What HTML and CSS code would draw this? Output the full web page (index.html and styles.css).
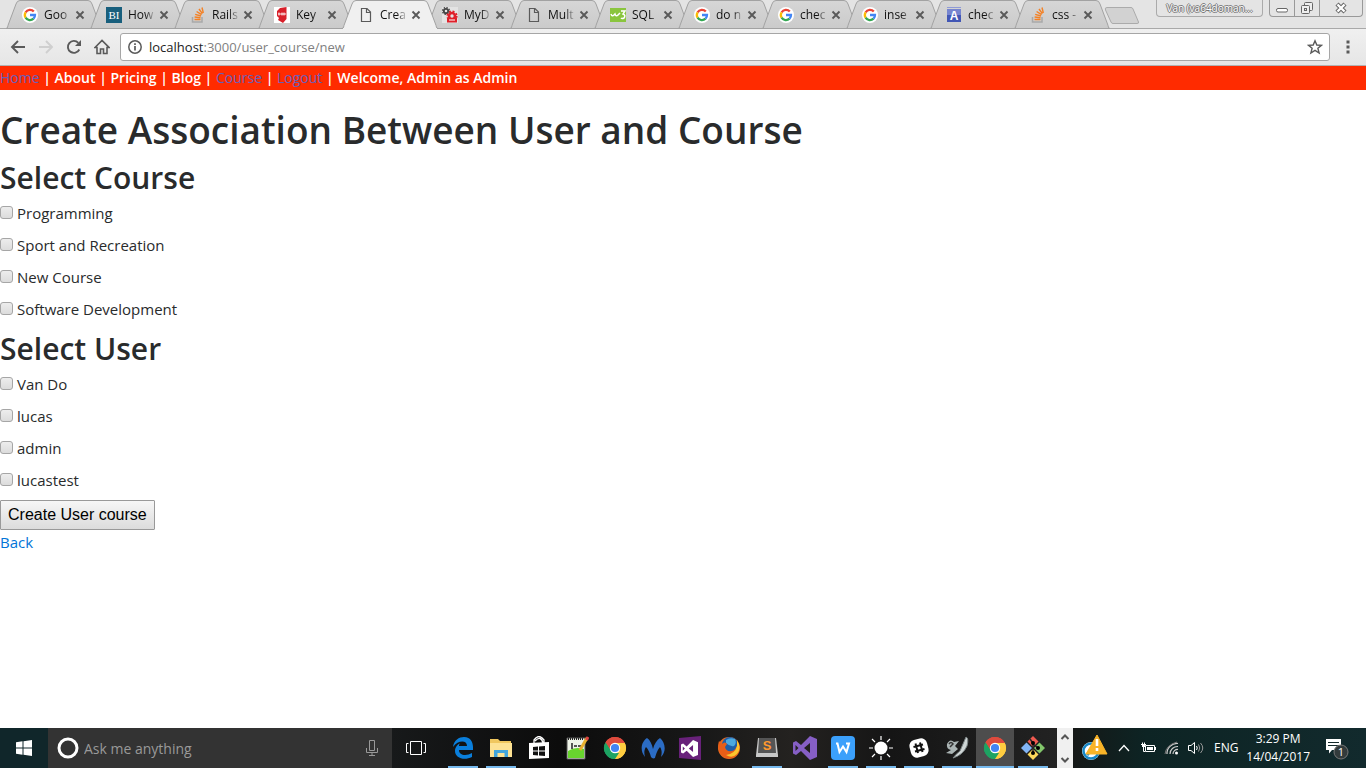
FILE: index.html
```html
<!DOCTYPE html>
<html lang="en">
<head>
<meta charset="utf-8">
<title>Create Association Between User and Course</title>
<link rel="stylesheet" href="styles.css">
</head>
<body>
<svg class="defs" aria-hidden="true">
  <defs>
    <linearGradient id="tabfill" x1="0" y1="0" x2="0" y2="1"><stop offset="0" stop-color="#d6d6d6"/><stop offset="1" stop-color="#cbcbcb"/></linearGradient>
    <symbol id="shape" viewBox="0 0 96 29"><path d="M0 28.5C2 28.5 1.500 26 2.500 24L10 4Q11 .5 14 .5H82Q85 .5 86 4L93.500 24C94.500 26 94 28.500 96 28.500Z"/></symbol>
    <symbol id="google" viewBox="0 0 16 16"><circle cx="8" cy="8" r="8" fill="#fff"/><g fill="none" stroke-width="2.300"><path d="M3.600 5.300A5.100 5.100 0 0 1 11.800 4.600" stroke="#ea4335"/><path d="M3.600 5.300A5.200 5.200 0 0 0 3.600 10.700" stroke="#fbbc05"/><path d="M3.600 10.700A5.100 5.100 0 0 0 11.500 11.700" stroke="#34a853"/><path d="M8 8H13A5 5 0 0 1 11.500 11.700" stroke="#4285f4"/></g></symbol>
    <symbol id="stack" viewBox="0 0 16 16"><path d="M2.500 10V15H12V10" fill="none" stroke="#a9a9a9" stroke-width="1.500"/><path d="M4.500 12.500H10.500M4.600 10L10.500 10.800M5.200 7.300L11 9M6.600 4.500L11.600 7.700M9 2L12.400 6.700M12 .5L13.300 6" stroke="#f48024" stroke-width="1.400"/></symbol>
    <symbol id="page" viewBox="0 0 16 16"><path d="M3.500 1.500H9L12.500 5V14.500H3.500ZM8.500 1.500V5.500H12.500" fill="none" stroke="#5a5a5a" stroke-width="1.200"/></symbol>
    <symbol id="x" viewBox="0 0 10 10"><path d="M1.500 1.500L8.500 8.500M8.500 1.500L1.500 8.500" stroke="#5a5a5a" stroke-width="1.900"/></symbol>
    <symbol id="chrome" viewBox="0 0 24 24"><path d="M12 12L2.470 6.500A11 11 0 0 1 21.530 6.500Z" fill="#ea4335"/><path d="M12 12L21.530 6.500A11 11 0 0 1 12 23Z" fill="#ffcd40"/><path d="M12 12V23A11 11 0 0 1 2.470 6.500Z" fill="#1da362"/><path d="M12 7H21.800A11 11 0 0 1 12 23L16.300 14.500Z" fill="#ffcd40"/><path d="M12 7H21.800A11 11 0 0 0 2.470 6.500L7.700 14.500Z" fill="#dd4b3e"/><path d="M2.470 6.500L7.700 14.500L12 17H16L12 23A11 11 0 0 1 2.470 6.500Z" fill="#1da362"/><circle cx="12" cy="12" r="5.200" fill="#fff"/><circle cx="12" cy="12" r="4.100" fill="#4285f4"/></symbol>
    <symbol id="vs" viewBox="0 0 24 24"><path fill-rule="evenodd" d="M17 0L24 3V21L17 24L8 15L3 19L0 17.500V6.500L3 5L8 9ZM17 7L11 12L17 17ZM2.500 9V15L5.500 12Z"/></symbol>
  </defs>
</svg>

<header class="browser">
  <div class="strip">
    <nav class="tabs" aria-label="Tabs">
      <div class="tab"><svg class="shape"><use href="#shape"/></svg><svg class="fav"><use href="#google"/></svg><span class="name">Goo</span><button class="close" aria-label="Close tab"><svg><use href="#x"/></svg></button></div>
      <div class="tab"><svg class="shape"><use href="#shape"/></svg><svg class="fav" viewBox="0 0 16 16"><path d="M0 0H16V16H0Z" fill="#185f7d"/><text x="8" y="12" class="bi" text-anchor="middle">BI</text></svg><span class="name">How</span><button class="close" aria-label="Close tab"><svg><use href="#x"/></svg></button></div>
      <div class="tab"><svg class="shape"><use href="#shape"/></svg><svg class="fav"><use href="#stack"/></svg><span class="name">Rails</span><button class="close" aria-label="Close tab"><svg><use href="#x"/></svg></button></div>
      <div class="tab"><svg class="shape"><use href="#shape"/></svg><svg class="fav" viewBox="0 0 16 16"><path d="M0 0H16V16H0Z" fill="#fff"/><path d="M6 1L12.500 0V12L9 16L4 13L5 11L3 9V4Z" fill="#d8202a"/><path d="M4 7H12M5 5.500V8.500M8 5.500V8.500M10 5.500V8.500" stroke="#fff" stroke-width=".9"/></svg><span class="name">Key</span><button class="close" aria-label="Close tab"><svg><use href="#x"/></svg></button></div>
      <div class="tab active"><svg class="shape"><use href="#shape"/></svg><svg class="fav"><use href="#page"/></svg><span class="name">Crea</span><button class="close" aria-label="Close tab"><svg><use href="#x"/></svg></button></div>
      <div class="tab"><svg class="shape"><use href="#shape"/></svg><svg class="fav" viewBox="0 0 16 16"><path d="M0 0H16V16H0Z" fill="#e3e3e3"/><circle cx="4" cy="4" r="2.200" fill="none" stroke="#444" stroke-width="1.800"/><circle cx="4" cy="4" r="3.500" fill="none" stroke="#444" stroke-width="1.200" stroke-dasharray="1.400 1.350"/><circle cx="10" cy="9" r="3" fill="none" stroke="#e0202a" stroke-width="2.600"/><circle cx="10" cy="9" r="4.800" fill="none" stroke="#e0202a" stroke-width="1.600" stroke-dasharray="2 1.770"/><path d="M5 11H15V15.500H5Z" fill="#e0202a"/><path d="M7 13H13" stroke="#fff"/></svg><span class="name">MyD</span><button class="close" aria-label="Close tab"><svg><use href="#x"/></svg></button></div>
      <div class="tab"><svg class="shape"><use href="#shape"/></svg><svg class="fav"><use href="#page"/></svg><span class="name">Mult</span><button class="close" aria-label="Close tab"><svg><use href="#x"/></svg></button></div>
      <div class="tab"><svg class="shape"><use href="#shape"/></svg><svg class="fav" viewBox="0 0 16 16"><path d="M0 1H16V15H0Z" fill="#8ac53e"/><path d="M1 7Q2 10 4 8L5 7Q6 10 8 8L10 6M11 4H15L13 7Q16 8 14 11Q12 12 11 11" fill="none" stroke="#fff" stroke-width="1.500"/></svg><span class="name">SQL</span><button class="close" aria-label="Close tab"><svg><use href="#x"/></svg></button></div>
      <div class="tab"><svg class="shape"><use href="#shape"/></svg><svg class="fav"><use href="#google"/></svg><span class="name">do n</span><button class="close" aria-label="Close tab"><svg><use href="#x"/></svg></button></div>
      <div class="tab"><svg class="shape"><use href="#shape"/></svg><svg class="fav"><use href="#google"/></svg><span class="name">chec</span><button class="close" aria-label="Close tab"><svg><use href="#x"/></svg></button></div>
      <div class="tab"><svg class="shape"><use href="#shape"/></svg><svg class="fav"><use href="#google"/></svg><span class="name">inse</span><button class="close" aria-label="Close tab"><svg><use href="#x"/></svg></button></div>
      <div class="tab"><svg class="shape"><use href="#shape"/></svg><svg class="fav" viewBox="0 0 16 16"><path d="M1 2H15V15H1Z" fill="#4257b5"/><path d="M1 2H15V8H1Z" fill="#7685cf"/><path d="M1 .5H15" stroke="#8f9ad6"/><text x="8" y="13" class="afav" text-anchor="middle">A</text></svg><span class="name">chec</span><button class="close" aria-label="Close tab"><svg><use href="#x"/></svg></button></div>
      <div class="tab"><svg class="shape"><use href="#shape"/></svg><svg class="fav"><use href="#stack"/></svg><span class="name">css -</span><button class="close" aria-label="Close tab"><svg><use href="#x"/></svg></button></div>
    </nav>
    <button class="newtab" aria-label="New tab"><svg viewBox="0 0 36 18"><path d="M3 .5H27Q28.500 .5 29 2L34.500 15Q35 16.500 33 16.500H9Q7.500 16.500 7 15L1.500 3Q.5 .5 3 .5Z" fill="#d2d2d2" stroke="#ababab"/></svg></button>
    <div class="caption">
      <button class="profile">Van (va64doman...</button>
      <div class="winbtns">
        <button aria-label="Minimize"><svg viewBox="0 0 24 16"><rect x="6.500" y="8.500" width="11" height="3.500" rx="1.500" fill="#fff" stroke="#666"/></svg></button>
        <button aria-label="Restore"><svg viewBox="0 0 24 16"><g fill="#eee" stroke="#666"><rect x="9.500" y="2.500" width="8" height="8" rx="1"/><rect x="6.500" y="5.500" width="8" height="8" rx="1"/><rect x="9.500" y="8.500" width="2" height="2"/></g></svg></button>
        <button class="wide" aria-label="Close"><svg viewBox="0 0 24 16"><path d="M8 4L16 12M16 4L8 12" stroke="#666" stroke-width="4.400"/><path d="M8.500 4.500L15.500 11.500M15.500 4.500L8.500 11.500" stroke="#fff" stroke-width="2.400"/></svg></button>
      </div>
    </div>
  </div>
  <div class="toolbar">
    <button aria-label="Back"><svg viewBox="0 0 16 16"><path d="M15 8H2.500M8 2L2 8L8 14" fill="none" stroke="#5a5a5a" stroke-width="1.900"/></svg></button>
    <button aria-label="Forward"><svg viewBox="0 0 16 16"><path d="M1 8H13.500M8 2L14 8L8 14" fill="none" stroke="#cfcfcf" stroke-width="1.900"/></svg></button>
    <button aria-label="Reload"><svg viewBox="0 0 16 16"><path d="M13.300 10.500A6 6 0 1 1 12.300 3.800" fill="none" stroke="#5a5a5a" stroke-width="1.900"/><path d="M15 1V7H9Z" fill="#5a5a5a"/></svg></button>
    <button aria-label="Home"><svg viewBox="0 0 16 16"><path d="M1 8.500L8 1.500L15 8.500H13V14.500H9.500V10H6.500V14.500H3V8.500Z" fill="none" stroke="#5a5a5a" stroke-width="1.600"/></svg></button>
    <div class="omnibox">
      <svg class="info" viewBox="0 0 16 16"><circle cx="8" cy="8" r="6.200" fill="none" stroke="#5a5a5a" stroke-width="1.500"/><path d="M8 7V11.500M8 4.300V6" stroke="#5a5a5a" stroke-width="1.700"/></svg>
      <span class="url">localhost<span>:3000/user_course/new</span></span>
      <button aria-label="Bookmark"><svg viewBox="0 0 16 16"><path d="M8 1.800L9.800 6L14.500 6.300L10.900 9.300L12.100 14L8 11.400L3.900 14L5.100 9.300L1.500 6.300L6.200 6Z" fill="none" stroke="#5a5a5a" stroke-width="1.400"/></svg></button>
    </div>
    <button class="menu" aria-label="Menu"><svg viewBox="0 0 16 16"><path d="M6.500 1.500h3v3h-3zM6.500 6.500h3v3h-3zM6.500 11.500h3v3h-3z" fill="#5a5a5a"/></svg></button>
  </div>
</header>

<main class="page">
  <nav class="sitenav"><a href="#home">Home</a> | About | Pricing | Blog | <a href="#course">Course</a> | <a href="#logout">Logout</a> | Welcome, Admin as Admin</nav>
  <h1>Create Association Between User and Course</h1>
  <form>
    <h2>Select Course</h2>
    <label><input type="checkbox">Programming</label>
    <label><input type="checkbox">Sport and Recreation</label>
    <label><input type="checkbox">New Course</label>
    <label><input type="checkbox">Software Development</label>
    <h2>Select User</h2>
    <label><input type="checkbox">Van Do</label>
    <label><input type="checkbox">lucas</label>
    <label><input type="checkbox">admin</label>
    <label><input type="checkbox">lucastest</label>
    <button class="submit" type="button">Create User course</button>
  </form>
  <a class="back" href="#back">Back</a>
</main>

<footer class="taskbar">
  <button class="start" aria-label="Start"><svg viewBox="0 0 16 16"><path d="M0 2.200L6.500 1.300V7.500H0ZM7.500 1.200L16 0V7.500H7.500ZM0 8.500H6.500V14.700L0 13.800ZM7.500 8.500H16V16L7.500 14.800Z" fill="#fff"/></svg></button>
  <div class="search">
    <svg class="ring" viewBox="0 0 22 22"><circle cx="11" cy="11" r="9" fill="none" stroke="#fff" stroke-width="3"/></svg>
    <input type="text" aria-label="Search" placeholder="Ask me anything">
    <svg class="mic" viewBox="0 0 12 16"><path d="M3.500 .5H8.500V10.500H3.500ZM.5 8V12.500H11.500V8M6 12.500V15.500M3 15.500H9" fill="none" stroke="#999"/></svg>
  </div>
  <div class="apps">
    <button class="taskview" aria-label="Task view"><svg viewBox="0 0 24 24"><path d="M6.500 5.500H17.500V18.500H6.500ZM4.500 7.500H2.500V16.500H4.500M19.500 7.500H21.500V16.500H19.500" fill="none" stroke="#fff"/></svg></button>
    <button class="open" aria-label="Edge"><svg viewBox="0 0 24 24"><path d="M2 11C3 4 8 1 13 1C20 1 22 7 22 11V14H8C8 20 16 20 21 17V21C13 25 4 22 4 15C4 11 7 8 9 7.500C8 8.500 8 9 8 10H16C16 4 7 4 2 11Z" fill="#0a7fdc"/></svg></button>
    <button class="open" aria-label="File Explorer"><svg viewBox="0 0 24 24"><path d="M1 3H9L11 5H22V8H1Z" fill="#f0c75e"/><path d="M1 7H23V21H1Z" fill="#fde293"/><path d="M5 21V14H19V21H15.500V17H8.500V21Z" fill="#42a5dc"/></svg></button>
    <button aria-label="Store"><svg viewBox="0 0 24 24"><path d="M7 8V4Q12 -3 17 4V7M8 5Q14 -1 16 7" fill="none" stroke="#fff" stroke-width="1.300"/><path d="M2 7L22 6V22L2 23Z" fill="#fff"/><path d="M6 11L11 10.500V14.500H6ZM12 10.500L18 10V14.500H12ZM6 15.500H11V19.500L6 19ZM12 15.500H18V20L12 19.500Z" fill="#111"/></svg></button>
    <button aria-label="Notepad++"><svg viewBox="0 0 24 24"><path d="M2 2H20V23H2Z" fill="#eef3e8" stroke="#555"/><path d="M3 15Q10 10 19 13V22H3Z" fill="#68d52e"/><path d="M3 3H19" stroke="#222" stroke-width="2" stroke-dasharray="1 1"/><path d="M7 7V13M9 10H12M13 10H16" stroke="#222" stroke-width="1.500"/><path d="M22 2L15 14" stroke="#e8b02e" stroke-width="3"/><path d="M23 1L21.500 4" stroke="#d44" stroke-width="3"/></svg></button>
    <button aria-label="Chrome"><svg><use href="#chrome"/></svg></button>
    <button aria-label="Malwarebytes"><svg viewBox="0 0 24 24"><path d="M4 21C-2 14 1 5 6 2C9 4 11 8 12 13C13 8 16 4 19 2C24 6 26 15 20 21C21 17 21 14 19 11C17 13 15 18 14 22C12 23 11 22 10 21C9 17 7 13 5 11C3 14 3 17 4 21Z" fill="#2b6cc4"/></svg></button>
    <button aria-label="Visual Studio"><svg viewBox="0 0 24 24"><path d="M0 2L22 0V24L0 22Z" fill="#68217a"/><use href="#vs" x="2" y="4" width="17" height="17" fill="#fff"/></svg></button>
    <button aria-label="Firefox"><svg viewBox="0 0 24 24"><circle cx="12" cy="12" r="11" fill="#ea6a1e"/><circle cx="13" cy="9" r="8" fill="#1f5fa8"/><path d="M9 4Q13 1 18 3Q20 7 17 10Q13 11 9 7Z" fill="#4da9df"/><path d="M2 5L5 8Q8 5 10 8L8 11Q9 16 15 15Q19 14 21 7Q25 16 17 21Q8 25 3 17Q0 11 2 5Z" fill="#e85e17"/><path d="M20 4Q25 12 20 18Q15 23 9 19Q18 18 20 10Z" fill="#fbc52d"/></svg></button>
    <button class="open" aria-label="Sublime Text"><svg viewBox="0 0 24 24"><path d="M3 2H21L23 19V21H1V19Z" fill="#c8c8c8"/><path d="M4 2H20L21 17H3Z" fill="#555"/><text class="subl" x="12" y="14" text-anchor="middle">S</text></svg></button>
    <button aria-label="Visual Studio Code"><svg fill="#865fc5"><use href="#vs"/></svg></button>
    <button class="open" aria-label="WPS Writer"><svg viewBox="0 0 24 24"><rect width="24" height="24" rx="4" fill="#3ba0fb"/><path d="M5 7.500H6.500L8.500 16L12 10.500L15.500 16L18 7.500H15" fill="none" stroke="#fff" stroke-width="2"/></svg></button>
    <button class="open" aria-label="Brightness"><svg viewBox="0 0 24 24"><circle cx="12" cy="12" r="6.500" fill="#fff"/><path d="M12 0V4M12 20V24M0 12H4M20 12H24M3 3L6 6M18 18L21 21M3 21L6 18M18 6L21 3" stroke="#fff" stroke-width="1.200"/></svg></button>
    <button class="open" aria-label="Slack"><svg viewBox="0 0 24 24"><rect x="3" y="3" width="18" height="18" rx="6" fill="#fff" transform="rotate(-14 12 12)"/><path d="M8.500 7.500L11 17M13 6.500L15.500 16M6.500 11L16 8.500M8 15.500L17.500 13" stroke="#111" stroke-width="2"/></svg></button>
    <button class="open" aria-label="MySQL client"><svg viewBox="0 0 24 24"><path d="M21 1Q24 2 22 10Q18 19 8 22Q11 18 15 15Q18 8 21 1Z" fill="#cfd6d6" stroke="#7c8586"/><path d="M2 8Q5 2 9 6L14 5L10 10L13 13L7 18L1 17L6 14Q1 13 2 8Z" fill="#a9b3b3"/><path d="M4 8Q6 5 8 8L5 11" stroke="#333" stroke-width="1.500" fill="none"/></svg></button>
    <button class="open current" aria-label="Chrome windows"><svg><use href="#chrome"/></svg></button>
    <button class="open" aria-label="Git Bash"><svg viewBox="0 0 24 24"><path d="M12 0L17.500 5.500L12 11L6.500 5.500Z" fill="#f05a50"/><path d="M5.500 6.500L11 12L5.500 17.500L0 12Z" fill="#82b4f5"/><path d="M18.500 6.500L24 12L18.500 17.500L13 12Z" fill="#82c66b"/><path d="M12 13L17.500 18.500L12 24L6.500 18.500Z" fill="#fbd75b"/><path d="M9 3L12 7V17M12 8L17 12" fill="none" stroke="#292929" stroke-width="1.500"/><circle cx="12" cy="7" r="2"/><circle cx="12" cy="17" r="2"/><circle cx="17" cy="12" r="2"/></svg></button>
  </div>
  <div class="scroller">
    <button aria-label="Scroll up"><svg viewBox="0 0 10 8"><path d="M1.500 6L5 2.500L8.500 6" fill="none" stroke="#555" stroke-width="2"/></svg></button>
    <button aria-label="Scroll down"><svg viewBox="0 0 10 8"><path d="M1.500 2L5 5.500L8.500 2" fill="none" stroke="#555" stroke-width="2"/></svg></button>
  </div>
  <div class="tray">
    <svg class="warn" viewBox="0 0 28 28"><circle cx="11" cy="17" r="9" fill="#fff"/><circle cx="11" cy="17" r="7.500" fill="none" stroke="#1688c9" stroke-width="2.500"/><path d="M7 21L12 15" stroke="#1688c9" stroke-width="3"/><path d="M17 1L27 20H6Z" fill="#f9b428" stroke="#f9b428" stroke-linejoin="round"/><path d="M17 5V12M17 14V17" stroke="#fff" stroke-width="2.600"/></svg>
    <svg class="chev" viewBox="0 0 12 8"><path d="M1 7L6 1.500L11 7" fill="none" stroke="#fff" stroke-width="1.300"/></svg>
    <svg class="ti" viewBox="0 0 16 16"><path d="M5.500 5.500H14.500V11.500H5.500ZM1 4.500H6M2.500 2.500V4.500M4.500 2.500V4.500M3.500 7V11.500H5" fill="none" stroke="#fff"/><path d="M7 7H13V10H7ZM2 5H5V7H2ZM15 7H16V10H15Z" fill="#fff"/></svg>
    <svg class="ti" viewBox="0 0 16 16"><g fill="none" stroke="#ccc" stroke-width="1.200"><path d="M3 14A10 10 0 0 1 14 3.500M6 14A7.500 7.500 0 0 1 14 6.500M9 14A4.500 4.500 0 0 1 14 9.500"/></g><path d="M1 14Q2 5 13 2" fill="none" stroke="#777"/><circle cx="12.500" cy="13" r="1.500" fill="#fff"/></svg>
    <svg class="ti" viewBox="0 0 16 16"><path d="M.5 5.500H3L6.500 2.500V13.500L3 10.500H.5Z" fill="none" stroke="#fff"/><path d="M8.500 6Q10 8 8.500 10" fill="none" stroke="#fff"/><path d="M10.500 4.500Q13 8 10.500 11.500M12.500 3Q17 8 12.500 13" fill="none" stroke="#999"/></svg>
    <span class="lang">ENG</span>
    <time class="clock"><span>3:29 PM</span><span>14/04/2017</span></time>
    <button class="note" aria-label="Notifications"><svg viewBox="0 0 24 24"><path d="M1 3H16V14H7L4 17.500V14H1Z" fill="#fff"/><path d="M3 6.500H14M3 9.500H14" stroke="#142a2c"/><circle cx="16" cy="16" r="7" fill="#333b3c" stroke="#777"/><text class="count" x="16" y="20" text-anchor="middle">1</text></svg></button>
  </div>
</footer>
</body>
</html>
```
FILE: styles.css
```css
* { box-sizing: border-box; }
html, body { height: 100%; }
body {
  margin: 0;
  min-height: 100vh;
  display: flex;
  flex-direction: column;
  background: #fff;
  color: #292b2c;
  font: 15px/24px "Open Sans", "Noto Sans", sans-serif;
}
button { margin: 0; padding: 0; border: 0; background: none; font: inherit; color: inherit; }
svg { display: block; }
.defs { position: absolute; width: 0; height: 0; }

.browser { background: #e6e6e6; font: 12px/16px "Open Sans", sans-serif; }
.strip { display: flex; align-items: flex-start; height: 29px; padding-left: 6px; border-bottom: 1px solid #a9a9a9; background: #e4e4e4; }
.tabs { display: grid; grid-template-columns: repeat(13, minmax(0, 84px)); flex: 0 1 1092px; }
.tab { position: relative; display: flex; align-items: center; height: 29px; padding: 1px 0 0 16px; }
.shape { position: absolute; left: 0; top: 0; width: 96px; height: 29px; fill: url(#tabfill); stroke: #a2a2a2; }
.fav { position: relative; z-index: 1; flex: none; width: 16px; height: 16px; }
.bi { font: 11px "Liberation Serif", serif; fill: #fff; }
.afav { font: bold 12px "Liberation Sans", sans-serif; fill: #fff; }
.name { position: relative; z-index: 1; width: 28px; margin-left: 6px; white-space: nowrap; color: #111; -webkit-mask-image: linear-gradient(90deg, #000 60%, transparent); mask-image: linear-gradient(90deg, #000 60%, transparent); }
.close { position: relative; z-index: 1; margin-left: 3px; }
.close svg { width: 10px; height: 10px; }
.active { z-index: 2; }
.active .shape { fill: #f0f0f0; }
.active::after { content: ""; position: absolute; left: 1px; bottom: 0; width: 94px; height: 1px; background: #f0f0f0; }
.newtab { flex: none; margin: 7px 0 0 6px; }
.newtab svg { width: 36px; height: 18px; }
.caption { display: flex; margin-left: auto; padding-right: 3px; gap: 6px; }
.profile { width: 107px; height: 17px; border: 1px solid #aaa; border-top: 0; border-radius: 0 0 4px 4px; font-size: 10px; line-height: 16px; color: #fff; text-shadow: 1px 0 #777, -1px 0 #777, 0 1px #777, 0 -1px #777; white-space: nowrap; }
.winbtns { display: flex; border: 1px solid #999; border-top: 0; border-radius: 0 0 4px 4px; }
.winbtns button { width: 25px; height: 16px; border-right: 1px solid #999; }
.winbtns .wide { width: 42px; border: 0; }
.winbtns svg { width: 24px; height: 16px; margin: 0 auto; }

.toolbar { display: flex; align-items: center; height: 37px; padding: 0 10px 0 10px; gap: 12px; border-bottom: 1px solid #b2b2b2; background: linear-gradient(#f0f0f0, #e6e6e6); }
.toolbar svg { width: 16px; height: 16px; }
.omnibox { flex: 1; display: flex; align-items: center; height: 28px; margin-left: -2px; padding: 0 6px; border: 1px solid #a6a6a6; border-radius: 3px; background: #fff; }
.url { flex: 1; margin-left: 6px; font: 13px/20px "Open Sans", sans-serif; color: #222; }
.url span { color: #808080; }
.menu { margin-left: -2px; }

.page { flex: 1; min-height: 0; }
.sitenav { background: #ff2b00; color: #fff; font-size: 14px; font-weight: 600; white-space: nowrap; }
a { color: #0275d8; text-decoration: none; }
.sitenav a { color: #6a5fb8; font-weight: 500; }
h1, h2 { margin: 0; font-weight: 600; }
h1 { margin: 18px 0 6px; font-size: 37px; line-height: 44px; }
h2 { margin: 2px 0 6px; font-size: 30px; line-height: 35px; }
form { display: flex; flex-direction: column; align-items: flex-start; }
label { display: flex; align-items: flex-start; margin-bottom: 8px; }
input[type="checkbox"] { appearance: none; width: 13px; height: 13px; margin: 5px 4px 0 0; border: 1px solid #a6a6a6; border-radius: 3px; background: linear-gradient(#ededed, #dcdcdc); }
.submit { height: 30px; padding: 0 7px; border: 1px solid #999; border-radius: 1px; background: linear-gradient(#f6f6f6, #dcdcdc); color: #000; font: 16px/24px "Liberation Sans", sans-serif; }
.back { display: inline-block; }

.taskbar { display: flex; height: 40px; background: #141414; color: #fff; font: 12px/18px "Open Sans", sans-serif; }
.start { width: 48px; background: #10262a; }
.start svg { width: 16px; height: 16px; margin: 0 auto; }
.search { display: flex; align-items: center; width: 344px; padding: 0 14px 0 9px; background: #333; }
.ring { width: 22px; height: 22px; }
.mic { width: 12px; height: 16px; }
.search input { flex: 1; min-width: 0; height: 40px; margin-left: 5px; padding: 0; border: 0; background: none; color: #fff; font: 14px/20px "Open Sans", sans-serif; }
.search input::placeholder { color: #999; opacity: 1; }
.apps { display: flex; width: 665px; background: linear-gradient(90deg, #17191a, #0c0c0c 25%, #171717 45%, #242220 60%, #151515 75%, #222); }
.apps button { display: flex; flex: none; align-items: center; justify-content: center; width: 38px; height: 40px; }
.apps svg { width: 24px; height: 24px; }
.apps .taskview { width: 48px; margin-right: 4px; }
.apps .open { background: linear-gradient(#76b9ed, #76b9ed) center bottom / 30px 2px no-repeat; }
.apps .current { background: linear-gradient(#76b9ed, #76b9ed) center bottom / 38px 2px no-repeat, #4d4d4d; }
.subl { font: bold 13px "Liberation Sans", sans-serif; fill: #ff9a2e; }
.scroller { display: flex; flex-direction: column; justify-content: space-between; align-items: center; width: 16px; padding: 5px 0 4px; background: #f0f0f0; }
.scroller svg { width: 10px; height: 8px; }
.tray { flex: 1; display: flex; align-items: center; padding: 0 17px 0 7px; background: linear-gradient(90deg, #151817, #0d2424 25%, #122a2d); }
.warn { width: 28px; height: 28px; }
.chev { width: 12px; height: 8px; margin: 0 10px 0 10px; }
.ti { width: 16px; height: 16px; margin-right: 8px; }
.lang { margin-left: 2px; }
.clock { display: flex; flex-direction: column; align-items: center; margin-left: auto; }
.note { margin-left: 15px; }
.note svg { width: 24px; height: 24px; }
.count { font: 11px "Open Sans", sans-serif; fill: #fff; }
```
